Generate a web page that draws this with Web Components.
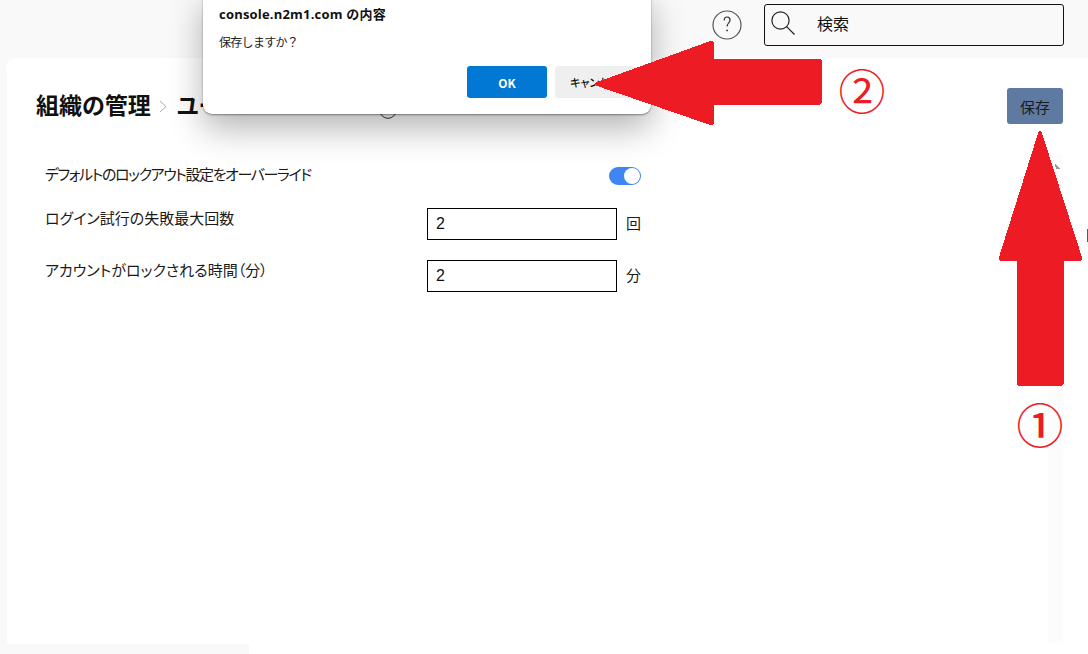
<!DOCTYPE html>
<html lang="ja">
<head>
<meta charset="utf-8">
<title>組織の管理</title>
<style>
  html, body { margin: 0; height: 654px; overflow: hidden; background: #f9f9f9; }
  body { position: relative; font-family: "Noto Sans CJK JP", "Noto Sans", sans-serif; color: #111; }
</style>
</head>
<body>
<top-bar></top-bar>
<settings-card>
  <form-row label="デフォルトのロックアウト設定をオーバーライド" kind="toggle" style="--tracking:-1.4px"></form-row>
  <form-row label="ログイン試行の失敗最大回数" kind="number" value="2" unit="回"></form-row>
  <form-row label="アカウントがロックされる時間（分）" kind="number" value="2" unit="分"></form-row>
</settings-card>
<page-footer></page-footer>
<confirm-dialog origin="console.n2m1.com の内容" message="保存しますか？"></confirm-dialog>
<step-callouts></step-callouts>

<script>
class TopBar extends HTMLElement {
  constructor() {
    super()
    this.attachShadow({ mode: 'open' }).innerHTML = `
      <style>
        :host { display: flex; align-items: flex-start; justify-content: flex-end; height: 58px; box-sizing: border-box; padding: 4px 24px 0 0; gap: 22px; }
        .help { margin-top: 6px; width: 30px; height: 30px; display: block; }
        .search { width: 300px; height: 42px; box-sizing: border-box; border: 1px solid #111; border-radius: 3px; display: flex; align-items: center; padding-left: 6px; }
        .search svg { width: 26px; height: 30px; display: block; margin-top: -3px; }
        .search span { margin: -4px 0 0 20px; font-size: 16px; font-weight: 400; color: #111; }
      </style>
      <svg class="help" viewBox="0 0 30 30" fill="none" stroke="#555" stroke-width="1.2">
        <circle cx="15" cy="15" r="14"/>
        <path d="M12.2 10.5c0-2.1 1.3-3.5 2.9-3.5s3 1.3 3 3.1c0 2.8-3 2.8-3 6.4" stroke="#333" stroke-width="1.2"/>
        <circle cx="15.1" cy="20.4" r=".9" fill="#333" stroke="none"/>
      </svg>
      <div class="search">
        <svg viewBox="0 0 26 30" fill="none" stroke="#222" stroke-width="1.2">
          <circle cx="9.5" cy="11.5" r="8.6"/>
          <path d="M15.6 17.6 23.5 25.5"/>
        </svg>
        <span>検索</span>
      </div>`
  }
}

class SettingsCard extends HTMLElement {
  constructor() {
    super()
    this.attachShadow({ mode: 'open' }).innerHTML = `
      <style>
        :host { display: block; position: relative; margin-left: 7px; height: 586px; box-sizing: border-box; background: #fff; border-top-left-radius: 8px; padding: 30px 25px 0 29px; }
        .head { display: flex; align-items: center; justify-content: space-between; height: 36px; }
        .crumbs { display: flex; align-items: center; font-size: 23px; line-height: 32px; margin-top: -4px; font-weight: 700; font-feature-settings: "palt"; color: #111; white-space: nowrap; }
        .sep { margin: 4px 10px 0 8px; display: block; }
        .rest { display: block; width: 202px; }
        .info { margin: 11px 0 0 0; display: block; }
        button { width: 56px; height: 36px; border: 0; border-radius: 3px; background: #5f7aa0; color: #1b1b1b; font: 400 15px "Noto Sans CJK JP", sans-serif; padding: 0; }
        .form { margin: 32px 0 0 9px; width: 596px; }
        .strip { position: absolute; right: 25px; top: 96px; bottom: 1px; width: 15px; background: #fcfcfc; }
      </style>
      <div class="strip"></div>
      <div class="head">
        <div class="crumbs">
          <span>組織の管理</span>
          <svg class="sep" width="8" height="13" viewBox="0 0 8 13" fill="none" stroke="#aaa"><path d="M1 1l6 5.5L1 12"/></svg>
          <span class="rest">ユー</span>
          <svg class="info" width="18" height="18" viewBox="0 0 18 18" fill="none" stroke="#333"><circle cx="9" cy="9" r="8.3"/></svg>
        </div>
        <button>保存</button>
      </div>
      <div class="form"><slot></slot></div>`
  }
}

class FormRow extends HTMLElement {
  constructor() {
    super()
    const kind = this.getAttribute('kind')
    const control = kind === 'toggle'
      ? `<div class="toggle"><i></i></div>`
      : `<div class="input">${this.getAttribute('value')}</div><span class="unit">${this.getAttribute('unit')}</span>`
    this.attachShadow({ mode: 'open' }).innerHTML = `
      <style>
        :host { display: grid; grid-template-columns: 382px 190px 1fr; align-items: start; font-size: 15px; color: #1a1a1a; }
        :host([kind="number"]) { height: 32px; margin-bottom: 20px; }
        :host([kind="toggle"]) { height: 52px; }
        .label { font-feature-settings: "palt"; letter-spacing: var(--tracking, 0); line-height: 22px; margin-top: -1px; white-space: nowrap; }
        :host([kind="toggle"]) .label { margin-top: 7px; }
        .toggle { grid-column: 2 / 4; justify-self: end; margin-top: 11px; width: 32px; height: 18px; border-radius: 9px; background: #3f86f4; position: relative; }
        .toggle i { position: absolute; right: 1px; top: 1px; width: 16px; height: 16px; border-radius: 50%; background: #fff; }
        .input { height: 32px; box-sizing: border-box; border: 1px solid #000; padding-left: 8px; font: 400 16px/30px "Liberation Sans", sans-serif; color: #111; }
        .unit { justify-self: end; line-height: 30px; }
      </style>
      <span class="label">${this.getAttribute('label')}</span>
      ${control}`
  }
}

class PageFooter extends HTMLElement {
  constructor() {
    super()
    this.attachShadow({ mode: 'open' }).innerHTML = `
      <style>
        :host { display: flex; height: 10px; }
        .rest { margin-left: 249px; flex: 1; background: #fff; }
      </style>
      <div class="rest"></div>`
  }
}

class ConfirmDialog extends HTMLElement {
  constructor() {
    super()
    this.attachShadow({ mode: 'open' }).innerHTML = `
      <style>
        :host { position: absolute; left: 203px; top: -10px; width: 448px; height: 124px; box-sizing: border-box; background: #fff; border-radius: 9px; padding: 14px 16px 0 16px; box-shadow: 0 1px 2px rgba(0,0,0,.4), 0 14px 34px rgba(0,0,0,.3); display: flex; flex-direction: column; }
        .origin { font: 700 13px/20px "Open Sans", "Noto Sans CJK JP", sans-serif; letter-spacing: .2px; color: #111; }
        .msg { margin-top: 8px; font-size: 12px; line-height: 20px; letter-spacing: -.7px; color: #222; }
        .actions { margin-top: 14px; display: flex; gap: 8px; }
        .actions button { width: 80px; height: 32px; border: 0; border-radius: 3px; padding: 0; font: 700 12px "Noto Sans CJK JP", "Open Sans", sans-serif; }
        .ok { margin-left: 248px; background: #0078d4; color: #fff; }
        .actions .cancel { background: #efefef; color: #111; font-size: 11px; font-weight: 500; font-feature-settings: "palt"; }
      </style>
      <div class="origin">${this.getAttribute('origin')}</div>
      <div class="msg">${this.getAttribute('message')}</div>
      <div class="actions">
        <button class="ok">OK</button>
        <button class="cancel">キャンセル</button>
      </div>`
  }
}

class StepCallouts extends HTMLElement {
  constructor() {
    super()
    this.attachShadow({ mode: 'open' }).innerHTML = `
      <style>
        :host { position: absolute; inset: 0; display: block; pointer-events: none; }
        svg { position: absolute; left: 0; top: 0; }
        span { position: absolute; width: 50px; line-height: 50px; text-align: center; font-size: 47px; font-weight: 400; color: #ed1c24; }
      </style>
      <svg width="1088" height="654" shape-rendering="crispEdges">
        <g fill="#ed1c24" stroke="#ed1c24" stroke-width="3" stroke-linejoin="round">
          <polygon points="596,84 712,42 712,60 820,60 820,103 712,103 712,124"/>
          <polygon points="1040,132 1081,259 1062,259 1062,384 1018,384 1018,259 1000,259"/>
        </g>
        <polygon points="1055,164 1060,169 1056,169" fill="#999"/>
        <rect x="1087" y="229" width="1" height="13" fill="#b5323a"/>
      </svg>
      <span style="left:837px;top:64px">②</span>
      <span style="left:1015px;top:398px;font-weight:500">①</span>`
  }
}

customElements.define('top-bar', TopBar)
customElements.define('settings-card', SettingsCard)
customElements.define('form-row', FormRow)
customElements.define('page-footer', PageFooter)
customElements.define('confirm-dialog', ConfirmDialog)
customElements.define('step-callouts', StepCallouts)
</script>
</body>
</html>
